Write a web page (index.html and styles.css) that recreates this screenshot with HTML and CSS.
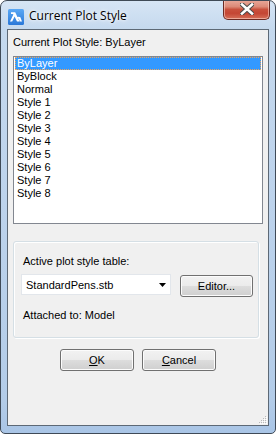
FILE: index.html
```html
<!DOCTYPE html>
<html>
<head>
<meta charset="utf-8">
<link rel="stylesheet" href="styles.css">
</head>
<body>
<div class="window">
  <div class="titlebar">
    <svg class="app-icon" width="16" height="16" viewBox="0 0 16 16">
      <defs>
        <linearGradient id="ig" x1="0" y1="0" x2="0" y2="1">
          <stop offset="0" stop-color="#5aa8f5"/>
          <stop offset="1" stop-color="#2a78d8"/>
        </linearGradient>
      </defs>
      <rect x="0" y="0" width="16" height="16" rx="1.5" fill="url(#ig)"/>
      <path d="M3 3.2 H7.2 L11.6 12.6 H9 L6.6 7.6 L4.2 12.6 H2 L5.4 5.5 L4.6 5 H3 Z" fill="#fff"/>
      <path d="M8.2 9.2 Q9.8 7.2 12.4 8.2 L14 12.6 H11.8 L10.8 9.8 Q9.6 9.6 9 10.6 Z" fill="#fff"/>
    </svg>
    <span class="title">Current Plot Style</span>
    <div class="close-btn">
      <svg width="14" height="12" viewBox="0 0 14 12">
        <path d="M2 1.5 L12 10.5 M12 1.5 L2 10.5" stroke="#4a4a4a" stroke-width="4.6" stroke-linecap="square"/>
        <path d="M2 1.5 L12 10.5 M12 1.5 L2 10.5" stroke="#ffffff" stroke-width="2.6" stroke-linecap="square"/>
      </svg>
    </div>
  </div>
  <div class="client">
    <div class="label top-label">Current Plot Style: ByLayer</div>
    <div class="listbox">
      <div class="item selected"><span>ByLayer</span></div>
      <div class="item">ByBlock</div>
      <div class="item">Normal</div>
      <div class="item">Style 1</div>
      <div class="item">Style 2</div>
      <div class="item">Style 3</div>
      <div class="item">Style 4</div>
      <div class="item">Style 5</div>
      <div class="item">Style 6</div>
      <div class="item">Style 7</div>
      <div class="item">Style 8</div>
    </div>
    <div class="groupbox">
      <div class="label group-label">Active plot style table:</div>
      <div class="row">
        <div class="combo">
          <span>StandardPens.stb</span>
          <svg class="arrow" width="7" height="4" viewBox="0 0 7 4"><path d="M0 0 H7 L3.5 4 Z" fill="#000"/></svg>
        </div>
        <div class="button editor">Editor...</div>
      </div>
      <div class="label attached">Attached to: Model</div>
    </div>
    <div class="buttons">
      <div class="button ok"><u>O</u>K</div>
      <div class="button cancel"><u>C</u>ancel</div>
    </div>
    <svg class="grip" width="9" height="9" viewBox="0 0 9 9">
      <g fill="#b9b9b9">
        <rect x="7" y="1" width="1" height="1"/>
        <rect x="5" y="3" width="1" height="1"/><rect x="7" y="3" width="1" height="1"/>
        <rect x="3" y="5" width="1" height="1"/><rect x="5" y="5" width="1" height="1"/><rect x="7" y="5" width="1" height="1"/>
        <rect x="1" y="7" width="1" height="1"/><rect x="3" y="7" width="1" height="1"/><rect x="5" y="7" width="1" height="1"/><rect x="7" y="7" width="1" height="1"/>
      </g>
      <g fill="#ffffff">
        <rect x="8" y="2" width="1" height="1"/>
        <rect x="6" y="4" width="1" height="1"/><rect x="8" y="4" width="1" height="1"/>
        <rect x="4" y="6" width="1" height="1"/><rect x="6" y="6" width="1" height="1"/><rect x="8" y="6" width="1" height="1"/>
        <rect x="2" y="8" width="1" height="1"/><rect x="4" y="8" width="1" height="1"/><rect x="6" y="8" width="1" height="1"/><rect x="8" y="8" width="1" height="1"/>
      </g>
    </svg>
  </div>
</div>
</body>
</html>
```

FILE: styles.css
```css
* { box-sizing: border-box; }
html, body { margin: 0; padding: 0; background: #ffffff; }
body {
  width: 276px;
  height: 434px;
  overflow: hidden;
  font-family: "Liberation Sans", Arial, sans-serif;
  font-size: 11px;
  color: #000;
}
.window {
  width: 276px;
  height: 434px;
  border: 1px solid #3f4a57;
  border-radius: 7px 7px 5px 5px;
  background: linear-gradient(180deg, #d6e5f5 0px, #c5d9ee 28px, #bdd3ec 200px, #b3cce8 400px, #a9c5e6 100%);
  display: flex;
  flex-direction: column;
  padding: 0 6px 7px 6px;
  overflow: hidden;
}
.titlebar {
  height: 28px;
  display: flex;
  align-items: flex-start;
  flex-shrink: 0;
}
.app-icon {
  margin-top: 8px;
  margin-left: 1px;
  flex-shrink: 0;
}
.title {
  font-family: "Open Sans", "Noto Sans", sans-serif;
  font-size: 12px;
  line-height: 16px;
  margin-top: 7px;
  margin-left: 5px;
  color: #000;
  text-shadow: 0 0 6px #ffffff, 0 0 3px #ffffff;
}
.close-btn {
  margin-left: auto;
  margin-top: -1px;
  margin-right: -1px;
  width: 47px;
  height: 20px;
  border: 1px solid #6b2a23;
  border-top: none;
  border-radius: 0 0 5px 5px;
  background: linear-gradient(180deg, #e9a99b 0%, #dc8a78 35%, #c9503c 50%, #c44634 70%, #d66f58 100%);
  box-shadow: inset 0 0 0 1px rgba(255, 220, 210, 0.55);
  display: flex;
  align-items: center;
  justify-content: center;
}
.close-btn svg { display: block; margin-top: -1px; }
.client {
  position: relative;
  flex: 1;
  border: 1px solid #5d6976;
  background: #f0f0f0;
  padding: 6px 5px 0 5px;
  display: flex;
  flex-direction: column;
}
.label {
  line-height: 13px;
  height: 13px;
  white-space: nowrap;
}
.top-label { padding-left: 0; }
.listbox {
  margin-top: 7px;
  height: 168px;
  width: 250px;
  border: 1px solid #828790;
  background: #ffffff;
  padding: 0 1px;
}
.item {
  height: 13px;
  line-height: 13px;
  padding-left: 2px;
  white-space: nowrap;
}
.item.selected {
  background: #3399ff;
  color: #fff;
  outline: 1px dotted #f2a55a;
  outline-offset: -1px;
}
.groupbox {
  margin-top: 17px;
  width: 246px;
  height: 97px;
  border: 1px solid #d5dfe5;
  border-radius: 3px;
  box-shadow: inset 1px 1px 0 #ffffff, 1px 1px 0 #ffffff;
  padding: 13px 5px 0 7px;
  display: flex;
  flex-direction: column;
}
.group-label { padding-left: 2px; }
.row {
  margin-top: 6px;
  display: flex;
  align-items: flex-start;
  gap: 9px;
}
.combo {
  width: 150px;
  height: 21px;
  background: #ffffff;
  border: 1px solid #e2e6eb;
  display: flex;
  align-items: center;
  padding-left: 4px;
  padding-right: 4px;
}
.combo span { flex: 1; }
.combo .arrow { display: block; margin-right: 0px; }
.button {
  height: 22px;
  border: 1px solid #707070;
  border-radius: 3px;
  background: linear-gradient(180deg, #f2f2f2 0%, #ebebeb 50%, #dddddd 51%, #cfcfcf 100%);
  box-shadow: inset 0 0 0 1px #fcfcfc;
  display: flex;
  align-items: center;
  justify-content: center;
  line-height: 13px;
}
.button u { text-decoration: underline; text-underline-offset: 1px; }
.editor {
  width: 73px;
  margin-top: 1px;
}
.attached {
  margin-top: 12px;
  padding-left: 2px;
}
.buttons {
  margin-top: 11px;
  display: flex;
  justify-content: center;
  gap: 8px;
  padding-right: 0;
}
.buttons .button { width: 74px; }
.grip {
  position: absolute;
  right: 1px;
  bottom: 1px;
}
```
